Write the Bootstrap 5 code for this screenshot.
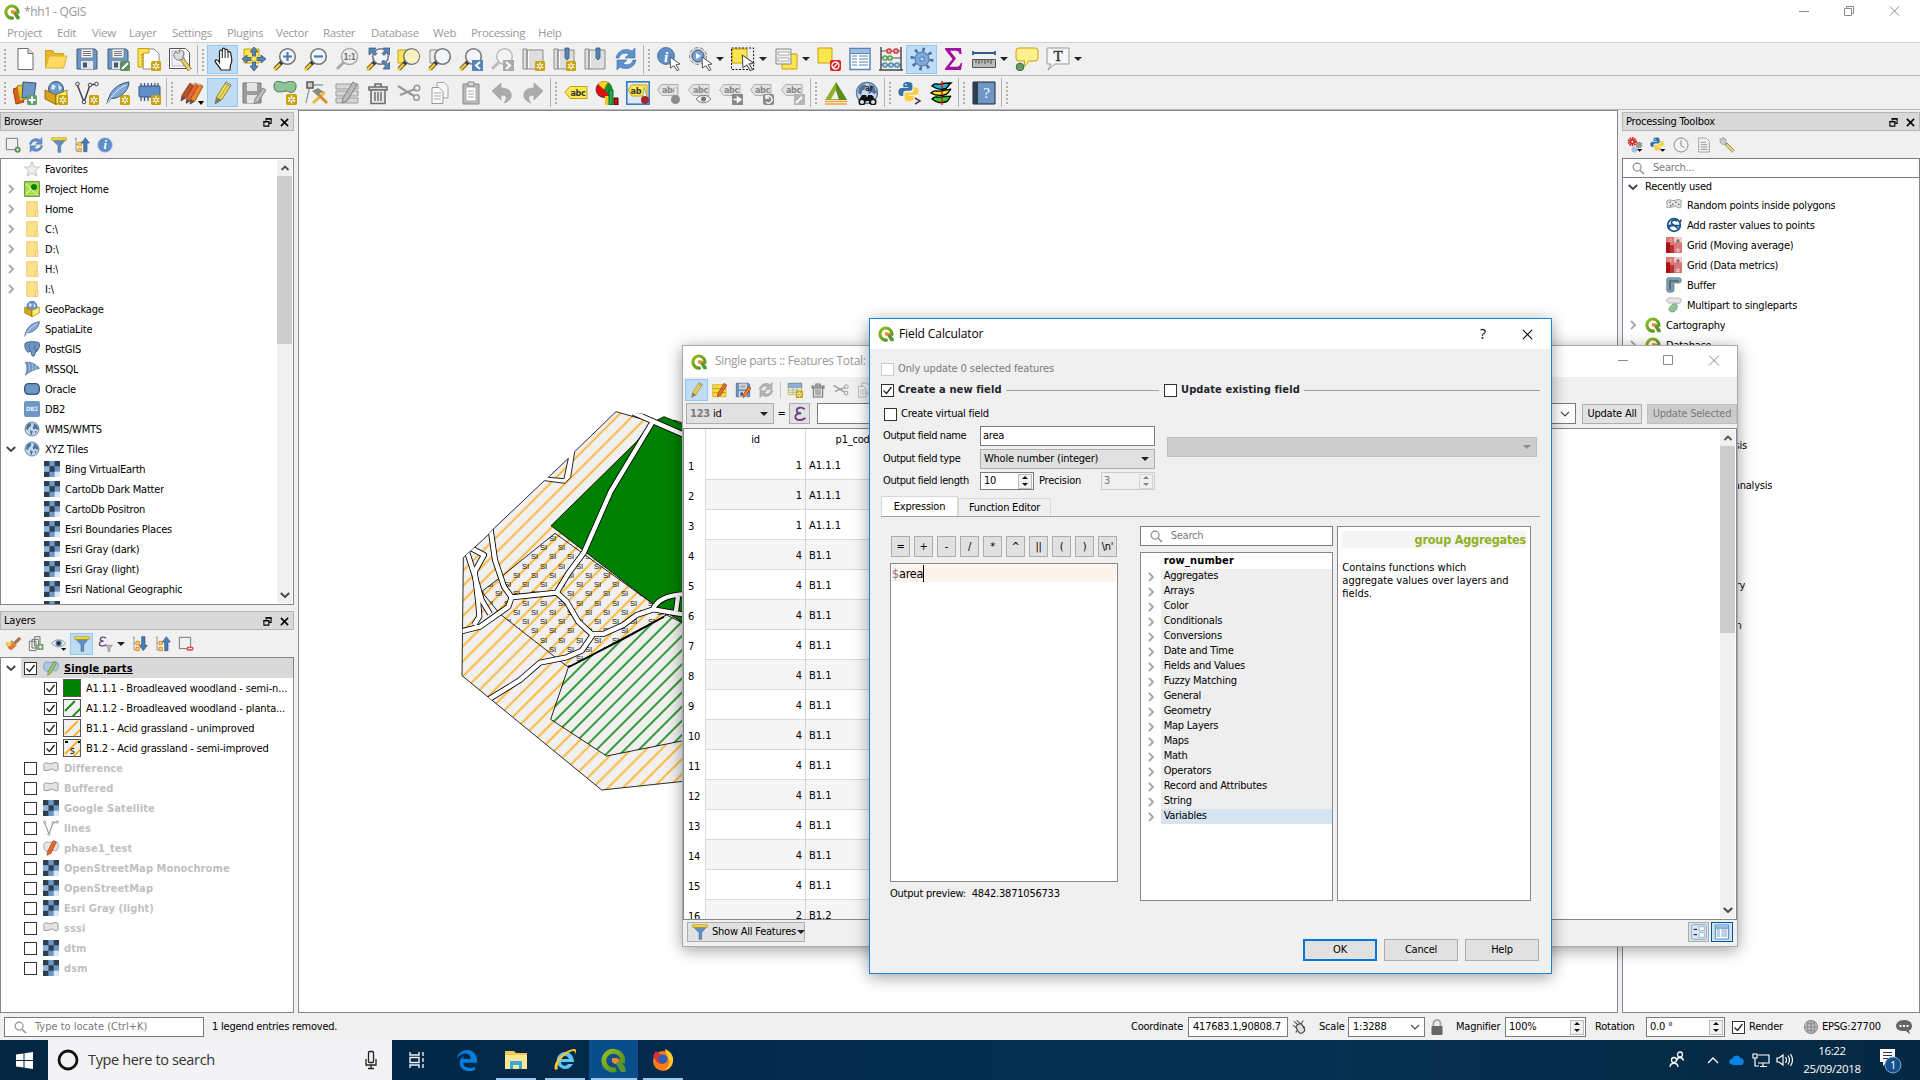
<!DOCTYPE html>
<html lang="en">
<head>
<meta charset="utf-8">
<title>*hh1 - QGIS</title>
<link href="https://cdn.jsdelivr.net/npm/bootstrap@5.3.0/dist/css/bootstrap.min.css" rel="stylesheet">
<style>
:root{--face:#f0f0f0;--edge:#828790;--ui:"DejaVu Sans Condensed","DejaVu Sans","Noto Sans",sans-serif;--seg:"Open Sans","Noto Sans",sans-serif}
body{width:1920px;height:1080px;overflow:hidden;background:var(--face);font:11px/14px var(--ui);font-stretch:condensed;letter-spacing:-.22px;color:#000;white-space:nowrap}
svg{display:block;flex:none}
.seg{font-family:var(--seg);font-stretch:normal}
.i24{width:24px;height:24px}.i20{width:20px;height:20px}.i18{width:18px;height:18px}.i16{width:16px;height:16px}
.titlebar{height:22px;background:#fff;color:#999;font-size:12px;padding-top:1px}
.menus{height:20px;background:#fff;color:#999;font-size:11.5px;letter-spacing:-.35px;display:grid;grid-template-columns:50px 35px 37px 43px 55px 49px 47px 48px 62px 38px 67px 40px;padding:4px 0 0 7px}
.tools{height:34px;border-top:1px solid #d0d0d0;border-bottom:1px solid #b8b8b8}
.grp{padding:0 2px 0 9px;border-right:1px solid #b4b4b4;position:relative}
.grp::before{content:"";position:absolute;left:4px;top:4px;bottom:3px;width:2px;background:repeating-linear-gradient(#b0b0b0 0 2px,transparent 2px 4px)}
.grp.open-end{border:0}
.tb{width:31px;height:29px;display:flex;align-items:center;justify-content:center}
.tb.on,.sb.on{background:#c0dcf3;border:1px solid #90c8f6}
.drop{width:12px}
.drop::after,.dd::after{content:"";display:block;border:4px solid transparent;border-top:4px solid #222;border-bottom:0;margin-left:1px}
.work{height:903px}
.leftdock{width:294px}.rightdock{width:298px;margin-left:4px}
.canvas{width:1320px;height:903px;margin-left:4px;background:#fff;border:1px solid var(--edge);overflow:hidden}
.docktitle{height:19px;margin-top:2px;background:#d9d9d9;border:1px solid #b5b5b5;padding:1px 4px 0 3px}
.docktitle.second{margin-top:6px}
.dockbar{height:27px;padding:1px 0 0 1px}
.sb{width:23px;height:22px;display:flex;align-items:center;justify-content:center}
.sep-v{width:1px;height:16px;background:#c4c4c4;margin:0 2px 0 3px}
.pane{background:#fff;border:1px solid var(--edge);overflow:hidden;position:relative}
.trow{height:20px;display:flex;align-items:center;padding-right:2px}
.chev{width:20px;display:flex;justify-content:center}
.trow .txt{padding-left:5px;overflow:hidden;text-overflow:ellipsis;padding-top:1px}
.cb{width:13px;height:13px;border:1px solid #333;background:#fff;flex:none}
.cb svg{width:11px;height:11px}
.cb.off{border-color:#ccc}
.bld{font-weight:700;letter-spacing:.1px}
.dim{color:#c0c0c0}
.vbar{position:absolute;right:1px;top:1px;bottom:1px;width:15px;background:#f0f0f0;display:flex;flex-direction:column;align-items:center;justify-content:space-between;padding:3px 0}
.vbar i{width:15px;background:#cdcdcd;position:absolute;top:16px}
.field{background:#fff;border:1px solid #7a7a7a;display:flex;align-items:center;padding:0 5px;height:20px}
.combo{background:#e1e1e1;border:1px solid #adadad;display:flex;align-items:center;justify-content:space-between;padding:0 5px 0 3px;height:20px}
.combo.inert{background:#ccc;border-color:#bfbfbf}
.combo.inert::after{border-top-color:#8e8e8e}
.pbtn{background:#e1e1e1;border:1px solid #adadad;display:flex;align-items:center;justify-content:center;height:20px;padding:0;border-radius:0}
.pbtn.h21{height:21px}
.spin{width:14px;height:15px;background:#f0f0f0;border:1px solid #bbb;display:flex;flex-direction:column;justify-content:space-around;align-items:center;flex:none;margin-right:1px}
.spin::before{content:"";border:3px solid transparent;border-bottom-color:#111;border-top:0}
.spin::after{content:"";border:3px solid transparent;border-top-color:#111;border-bottom:0}
.status{height:27px;padding-top:1px}
.gray{color:#7a7a7a}
.win{position:absolute;box-shadow:0 3px 15px rgba(0,0,0,.38)}
.attr{left:682px;top:345px;width:1056px;height:602px;background:var(--face);border:1px solid #aaa}
.wtitle{height:31px;background:#fff;font-size:12px;letter-spacing:-.1px}
.dlg{left:869px;top:318px;width:683px;height:656px;background:var(--face);border:1px solid #1883d7}
.grid-attr{height:492px;display:flex}
.vh{width:22px;border-right:1px solid #dcdcdc;padding-top:21px}
.vh div{height:30px;padding:10px 0 0 4px}
.acol{width:100px;border-right:1px solid #d4d4d4}
.acol .hd{height:21px;text-align:center;padding-top:4px}
.acol .cell{height:30px;border-bottom:1px solid #dadada;padding:9px 3px 0;letter-spacing:0}
.acol .cell:nth-child(odd){background:#f5f5f5}
.num{text-align:right}
.rule{height:1px;background:#a0a0a0;flex:1}
.frow{display:grid;grid-template-columns:97px 175px;align-items:center}
.frow>span{letter-spacing:-.4px}
.ops{gap:4px;margin:10px 0 6px 1px}
.ops .pbtn{width:19px;height:21px}
.tabs{height:20px;border-bottom:1px solid #a0a0a0;display:flex;align-items:flex-end;margin:9px 11px 0}
.tabs div{display:flex;align-items:center;justify-content:center;border:1px solid #d9d9d9;border-bottom:0}
.frw{height:15px;display:flex;align-items:center}
.frw .nm{height:15px;background:#eee;flex:1;padding-left:3px}
.frw .nm.plain{background:#fff;letter-spacing:.15px}.frw .nm.cur{background:#d6e4f0}
.frw .chev{width:20px}
.green-h{background:#f5f5f5;color:#93b023;font-weight:700;font-size:12.5px;height:17px;line-height:18px;text-align:right;letter-spacing:-.2px}
.helptxt{line-height:13px;margin-top:13px;letter-spacing:0;width:176px}
.taskbar{height:40px;background:linear-gradient(90deg,#032440,#042c4f 45%,#06304f 70%,#062842);color:#fff}
.startb{width:48px;height:40px;background:#042640}
.tsearch{width:344px;height:40px;background:#f3f3f5;color:#333;font-size:14.5px;letter-spacing:-.35px}
.tapp{width:49px;height:40px;display:flex;align-items:center;justify-content:center}
.tapp.run{background:linear-gradient(#9cc9ee,#9cc9ee) center bottom/40px 2px no-repeat}
.tapp.act{background:linear-gradient(#9cc9ee,#9cc9ee) center bottom/46px 2px no-repeat,#0a4f8c}
.tray{width:256px}
</style>
<script src="https://cdn.jsdelivr.net/npm/bootstrap@5.3.0/dist/js/bootstrap.bundle.min.js"></script>
</head>
<body class="d-flex flex-column">

<svg width="0" height="0" class="position-absolute">
<defs>
<linearGradient id="qg" x1="0" y1="0" x2="1" y2="1"><stop offset="0" stop-color="#93c01f"/><stop offset="1" stop-color="#4c8a1e"/></linearGradient>
<symbol id="q" viewBox="0 0 24 24"><path d="M20.500 14.500a9 9 0 1 0-6 6.200" fill="none" stroke="url(#qg)" stroke-width="4.600"/><path d="M13 13l4-3 6.500 9v4H19z" fill="#589632"/><path d="M10.500 9.500h5l2.500 2.500-4.500 3.500-3-2z" fill="#f08a2c"/></symbol>
<symbol id="star6" viewBox="0 0 10 10"><rect width="10" height="10" rx="1.500" fill="#c8a20a"/><path d="M5 1.300v7.400M1.800 3.200l6.400 3.600M8.200 3.200L1.800 6.800" stroke="#fff" stroke-width="1.300"/><circle cx="5" cy="5" r="1.100" fill="#c8a20a"/></symbol>
<symbol id="new" viewBox="0 0 24 24"><path d="M5 1.500h10l5 5v16H5z" fill="#fff" stroke="#6d6d6d"/><path d="M15 1.500v5h5" fill="#ddd" stroke="#6d6d6d"/></symbol>
<symbol id="open" viewBox="0 0 24 24"><path d="M1.500 21V3.500h7l2 3h9v3" fill="#e5b92a" stroke="#c99d1d"/><path d="M1.500 21L5 9h18l-3.500 12z" fill="#fddb62" stroke="#dbb236"/></symbol>
<symbol id="save" viewBox="0 0 24 24"><path d="M2 2h18l2 2v18H2z" fill="#6d97c4" stroke="#415a75"/><path d="M6 2h12v9H6z" fill="#f4f4f4" stroke="#7d8a97"/><path d="M8 4.500h8M8 6.500h8M8 8.500h8" stroke="#777"/><path d="M6 14h12v8H6z" fill="#e6e6e6"/><path d="M8 15.500h4v5H8z" fill="#415a75"/></symbol>
<symbol id="saveas" viewBox="0 0 24 24"><use href="#save"/><rect x="14" y="14" width="10" height="10" rx="1.500" fill="#5d8f5f"/><path d="M16 22l6-6" stroke="#fff" stroke-width="2"/></symbol>
<symbol id="layout" viewBox="0 0 24 24"><path d="M6 2h11l5 5v15H6z" fill="#fff" stroke="#888"/><path d="M1 1.500h11v4.500H6v14H1z" fill="#ffe25a" stroke="#c8a20a"/><path d="M4 8h2M4 11h2M4 14h2M4 17h2" stroke="#a88600"/><use href="#star6" x="14" y="14" width="10" height="10"/></symbol>
<symbol id="lmgr" viewBox="0 0 24 24"><path d="M1.500 1.500h16l4 4v16h-20z" fill="#fff" stroke="#555"/><path d="M4 4h12v15H4z" fill="#f0f0fa" stroke="#b9b9d0"/><path d="M14 12l8 11" stroke="#7b6520" stroke-width="4.500"/><path d="M14 12l8 11" stroke="#ecd070" stroke-width="3"/><path d="M8 4c0 2 2 3 3 2s0-3 0-3c4 0 6 3 4 6l0 3-3 1c-3 1-7-2-6-6z" fill="#ddd" stroke="#777"/></symbol>
<symbol id="hand" viewBox="0 0 24 24"><path d="M8 23c-1-3-5-6-6-9 1-2 3-1 4.500 1.500V4.500c0-2 2.500-2 2.800 0V2.500c.2-1.800 2.500-1.800 2.800 0v1c.2-1.600 2.600-1.500 2.800.5v1.500c.5-1.400 2.700-1.200 2.800.6C18.500 11 20 14 17.500 18l-.5 5z" transform="translate(2 0)" fill="#fff" stroke="#222" stroke-width="1.200"/><path d="M11.300 4v7M14.100 3.500V11M17 5v6" stroke="#222"/></symbol>
<symbol id="pansel" viewBox="0 0 24 24"><path d="M2 2h15v14H2z" fill="#fde54f" stroke="#c8a20a"/><path d="M12 0l4 5h-2.500v5.500H19V8l5 4-5 4v-2.500h-5.500V19H16l-4 5-4-5h2.500v-5.500H5V16l-5-4 5-4v2.500h5.500V5H8z" fill="#5684b8" stroke="#35567c" stroke-width=".8"/><path d="M9.500 9.500h5v5h-5z" fill="#fde54f"/></symbol>
<symbol id="mag" viewBox="0 0 24 24"><path d="M2 22l8-8" stroke="#333" stroke-width="4"/><path d="M1 23l6-6" stroke="#f5c62a" stroke-width="2.600"/><circle cx="14.500" cy="9.500" r="7.800" fill="#f1f5f7" stroke="#777" stroke-width="1.600"/></symbol>
<symbol id="zin" viewBox="0 0 24 24"><use href="#mag"/><path d="M14.500 5v9M10 9.500h9" stroke="#4a7cb5" stroke-width="2.200"/></symbol>
<symbol id="zout" viewBox="0 0 24 24"><use href="#mag"/><path d="M10 9.500h9" stroke="#4a7cb5" stroke-width="2.200"/></symbol>
<symbol id="z11" viewBox="0 0 24 24"><path d="M2 22l8-8" stroke="#aaa" stroke-width="3"/><circle cx="14.500" cy="9.500" r="8" fill="#eee" stroke="#aaa" stroke-width="1.500"/><text x="14.500" y="12.500" font-size="8" font-weight="700" text-anchor="middle" fill="#777">1:1</text></symbol>
<symbol id="zfull" viewBox="0 0 24 24"><use href="#mag"/><path d="M3 1h7l-2 2.500 3 3-2 2-3-3L3 8zM24 1h-7l2 2.500-3 3 2 2 3-3 3 2.500zM24 22v-7l-2.500 2-4-4-2 2 4 4-2.500 3z" fill="#5684b8" stroke="#35567c" stroke-width=".7"/></symbol>
<symbol id="zsel" viewBox="0 0 24 24"><path d="M1 3h12v13H1z" fill="#fde54f" stroke="#c8a20a"/><use href="#mag"/><circle cx="15" cy="9.500" r="7" fill="#f7f2c0"/></symbol>
<symbol id="zlay" viewBox="0 0 24 24"><path d="M2 3h12v13H2z" fill="#eee" stroke="#888"/><use href="#mag"/></symbol>
<symbol id="zlast" viewBox="0 0 24 24"><use href="#mag"/><rect x="13" y="13" width="11" height="11" fill="#5684b8"/><path d="M21 15l-4 3.500 4 3.500" fill="none" stroke="#fff" stroke-width="2"/></symbol>
<symbol id="znext" viewBox="0 0 24 24"><path d="M2 22l8-8" stroke="#bbb" stroke-width="3"/><circle cx="14.500" cy="9.500" r="7.800" fill="#f3f3f3" stroke="#bbb" stroke-width="1.500"/><rect x="13" y="13" width="11" height="11" fill="#aaa"/><path d="M16 15l4 3.500-4 3.500" fill="none" stroke="#fff" stroke-width="2"/></symbol>
<symbol id="map" viewBox="0 0 24 24"><path d="M2 2h4v20H2zM6 3h16v19H6z" fill="#dedede" stroke="#8c8c8c"/><path d="M7.500 4v17" stroke="#fff"/></symbol>
<symbol id="mapnew" viewBox="0 0 24 24"><use href="#map"/><use href="#star6" x="14" y="14" width="10" height="10"/></symbol>
<symbol id="bm" viewBox="0 0 24 24"><use href="#map"/><path d="M13 1h4v10l-2 2-2-2z" fill="#5684b8" stroke="#35567c" stroke-width=".8"/></symbol>
<symbol id="bmnew" viewBox="0 0 24 24"><use href="#bm"/><use href="#star6" x="14" y="14" width="10" height="10"/></symbol>
<symbol id="refresh" viewBox="0 0 24 24"><path d="M2 11C3 4 11 0 18 4l3-3v10H11l4-4C10 5 6 7 5 11z" fill="#5f92cc" stroke="#3e6ea6" stroke-width=".6"/><path d="M22 13c-1 7-9 11-16 7l-3 3V13h10l-4 4c5 2 9 0 10-4z" fill="#5f92cc" stroke="#3e6ea6" stroke-width=".6"/></symbol>
<symbol id="refreshg" viewBox="0 0 24 24"><path d="M2 11C3 4 11 0 18 4l3-3v10H11l4-4C10 5 6 7 5 11z" fill="#b5b5b5" stroke="#9a9a9a"/><path d="M22 13c-1 7-9 11-16 7l-3 3V13h10l-4 4c5 2 9 0 10-4z" fill="#b5b5b5" stroke="#9a9a9a"/></symbol>
<symbol id="cursor" viewBox="0 0 12 15"><path d="M1 1l10 7-4 .7 3 5-2 1-3-5L1.500 12z" fill="#fff" stroke="#555"/></symbol>
<symbol id="ident" viewBox="0 0 24 24"><circle cx="9" cy="9" r="8.500" fill="#5f8fc6" stroke="#456d9a" stroke-width=".8"/><text x="9" y="14.500" font-size="15" font-family="Liberation Serif,serif" font-style="italic" font-weight="700" fill="#fff" text-anchor="middle">i</text><use href="#cursor" x="12" y="9" width="12" height="15"/></symbol>
<symbol id="action" viewBox="0 0 24 24"><circle cx="10" cy="9" r="8.500" fill="#ddd" stroke="#888" stroke-dasharray="4 2"/><circle cx="10" cy="9" r="6" fill="#7ba2d2" stroke="#35567c"/><path d="M8 6l5 3-5 3z" fill="#fff"/><use href="#cursor" x="13" y="9" width="12" height="15"/></symbol>
<symbol id="selct" viewBox="0 0 24 24"><path d="M1 2h15v14H1z" fill="#fde54f" stroke="#c8a20a"/><path d="M.6 1h22v21.500H.6z" fill="none" stroke="#111" stroke-dasharray="2 1.500"/><use href="#cursor" x="10" y="7" width="14" height="17"/></symbol>
<symbol id="formsel" viewBox="0 0 24 24"><path d="M8 7h15v15H8z" fill="#fde54f" stroke="#c8a20a"/><path d="M2 2h15v15H2z" fill="#eee" stroke="#888"/><path d="M4 5h11v3H4zM4 11h11v3H4z" fill="#fff" stroke="#999" stroke-width=".8"/></symbol>
<symbol id="desel" viewBox="0 0 24 24"><path d="M1 1h14v15H1z" fill="#fde54f" stroke="#c8a20a"/><rect x="13" y="13" width="11" height="11" rx="2" fill="#d22"/><circle cx="18.500" cy="18.500" r="3.500" fill="none" stroke="#fff" stroke-width="1.300"/><path d="M16 21l5-5" stroke="#fff" stroke-width="1.300"/></symbol>
<symbol id="table" viewBox="0 0 24 24"><path d="M2 1.500h20v21H2z" fill="#fff" stroke="#5684b8" stroke-width="1.500"/><path d="M3 2h18v4H3z" fill="#9cbde0"/><path d="M4 9h5M11 9h9M4 12h5M11 12h9M4 15h5M11 15h9M4 18h5M11 18h9M3 6.500h18" stroke="#5684b8" stroke-width="1.200"/></symbol>
<symbol id="abac" viewBox="0 0 24 24"><path d="M2 0v23M22 0v23M0 23h24" stroke="#444" stroke-width="1.400"/><path d="M2 4h20M2 11h20M2 18h20" stroke="#555"/><g stroke-width="1.300"><g fill="#f6b0b0" stroke="#c33"><circle cx="10" cy="4" r="2.200"/><circle cx="17" cy="4" r="2.200"/></g><g fill="#bfe6bf" stroke="#4b9a4b"><circle cx="6" cy="11" r="2.200"/><circle cx="11" cy="11" r="2.200"/></g><g fill="#bcd8ee" stroke="#4a83ad"><circle cx="6" cy="18" r="2.200"/><circle cx="12" cy="18" r="2.200"/><circle cx="18" cy="18" r="2.200"/></g></g></symbol>
<symbol id="gear" viewBox="0 0 24 24"><circle cx="12" cy="12" r="9.500" fill="none" stroke="#4472a8" stroke-width="4" stroke-dasharray="2.600 4.860"/><circle cx="12" cy="12" r="7" fill="#7fa8db" stroke="#4472a8"/><circle cx="12" cy="12" r="2.200" fill="#c0dcf3" stroke="#4472a8"/></symbol>
<symbol id="sigma" viewBox="0 0 24 24"><path d="M4 1h16l.5 6h-2c-.5-2.500-1.500-3.200-4-3.200H9l6 7.700-6.500 8.200h7c2.500 0 3.500-1 4.200-3.700h1.500L20 23H4v-1.500l7.500-9.500L4 2.500z" fill="#a50fa0"/></symbol>
<symbol id="ruler" viewBox="0 0 24 24"><path d="M1 6h22M1 4v4M23 4v4" stroke="#2f5a8c" stroke-width="1.800"/><path d="M.5 12.500h23v8H.5z" fill="#bbb" stroke="#555"/><path d="M4 13v3M7 13v4M10 13v3M13 13v4M16 13v3M19 13v4" stroke="#444"/></symbol>
<symbol id="tip" viewBox="0 0 24 24"><path d="M4 1h16q3 0 3 3v7q0 3-3 3h-6l-5 6 .5-6H4q-3 0-3-3V4q0-3 3-3z" fill="#fdf08a" stroke="#c8a20a"/><circle cx="5" cy="20" r="3.800" fill="#6a9a6c" stroke="#3c6e3e"/></symbol>
<symbol id="textann" viewBox="0 0 24 24"><path d="M1 1h22v16H9l-7 6 3-6H1z" fill="#f4f6f8" stroke="#999"/><text x="12" y="14" font-size="15" font-family="Liberation Serif,serif" text-anchor="middle" fill="#333" stroke="#333" stroke-width=".4">T</text></symbol>
<symbol id="dsrc" viewBox="0 0 24 24"><path d="M0 8l6-2 5 15-8 2z" fill="#d9611c" stroke="#9a3f0d"/><path d="M4 5l11-2 1 14-9 3z" fill="#f0c22c" stroke="#a88600"/><path d="M10 1l13 1-2 14-12 1z" fill="#6d97c4" stroke="#35567c"/><rect x="14" y="14" width="10" height="10" rx="1.500" fill="#5d9f6f"/><path d="M19 15.500v7M15.500 19h7" stroke="#fff" stroke-width="2"/></symbol>
<symbol id="globe" viewBox="0 0 24 24"><circle cx="12" cy="12" r="10.500" fill="#c3d7ec" stroke="#56799f" stroke-width="1.300"/><path d="M4 7c3-4 5-4 7-3l-1 4-3 2-1 4-3-2zM14 3l5 3 3 6-3 1-2-2-3 2-1-4 2-2zM9 14l4 1-1 5-2 1zM16 15l3 0-2 4z" fill="#4f7096"/></symbol>
<symbol id="gpkg" viewBox="0 0 24 24"><circle cx="12" cy="8" r="7.500" fill="#6d97c4" stroke="#35567c"/><path d="M8 3l4 2-2 4-3-1zM14 3l4 4-3 3z" fill="#d6e3f0"/><path d="M1 9l11 5v9.500L1 18z" fill="#d9a514" stroke="#7c5e08" stroke-width=".8"/><path d="M23 9l-11 5v9.500L23 18z" fill="#ffef69" stroke="#7c5e08" stroke-width=".8"/></symbol>
<symbol id="gpkgn" viewBox="0 0 24 24"><use href="#gpkg"/><use href="#star6" x="14" y="14" width="10" height="10"/></symbol>
<symbol id="vline" viewBox="0 0 24 24"><path d="M2 3l7 18L15 4l7-1" fill="none" stroke="currentColor" stroke-width="1.500"/><g fill="#eee" stroke="currentColor"><circle cx="2.500" cy="3" r="1.800"/><circle cx="9" cy="21" r="1.800"/><circle cx="15" cy="4" r="1.800"/><circle cx="21.500" cy="3" r="1.800"/></g></symbol>
<symbol id="vlinen" viewBox="0 0 24 24"><use href="#vline" color="#445"/><use href="#star6" x="14" y="14" width="10" height="10"/></symbol>
<symbol id="feather" viewBox="0 0 24 24"><path d="M1 23C3 12 9 3 23 1c0 5-3 12-13 16l-5 .5z" fill="#7fa8d4" stroke="#35567c"/><path d="M1 23C6 14 12 8 20 4" fill="none" stroke="#e9f0f8"/></symbol>
<symbol id="feathern" viewBox="0 0 24 24"><use href="#feather"/><use href="#star6" x="14" y="14" width="10" height="10"/></symbol>
<symbol id="chip" viewBox="0 0 24 24"><path d="M4 2v18M7.500 2v18M11 2v18M14.500 2v18M18 2v18M21 2v18" stroke="#35567c" stroke-width="1.200"/><rect x="2" y="5" width="21" height="11" rx="1" fill="#5f8fc6" stroke="#35567c"/><use href="#star6" x="14" y="14" width="10" height="10"/></symbol>
<symbol id="pencil" viewBox="0 0 24 24"><path d="M4 23l1.500-7L15 1l5 3-9.500 15z" fill="#f2dd5b" stroke="#8f7f2c"/><path d="M14 2.500l1-1.500 5 3-1 1.600z" fill="#ddd" stroke="#888"/><path d="M4 23l1.500-7 5 3z" fill="#7a7a7a"/><path d="M8 17.500l9-14" stroke="#b3a136"/></symbol>
<symbol id="pencils" viewBox="0 0 24 24"><g stroke="#8e3414" stroke-width=".7"><path d="M1 20l1-6L10 2l4 2.500L6 17z" fill="#b5502c"/><path d="M6 22l1-6L15 2l4 2.500L11 19z" fill="#e8662a"/><path d="M10 23l1-6L19 3l4 2.500L15 20z" fill="#e8862a"/></g><path d="M1 20l1-5 3.500 2zM6 23l1-5 3.500 2zM10 23.500l1-5 3.500 2z" fill="#555"/><path d="M10 2l1-1 4 2-1 1.500zM15 2l1-1 4 2-1 1.500z" fill="#ccc"/><path d="M18 20h6l-3 4z"/></symbol>
<symbol id="saveg" viewBox="0 0 24 24"><path d="M1 2h18v20H1z" fill="#9c9c9c" stroke="#777"/><path d="M5 2h10v8H5zM5 14h10v8H5z" fill="#e4e4e4"/><path d="M12 23l1-5 8-11 3 2-8 12z" fill="#b9b9b9" stroke="#888"/></symbol>
<symbol id="poly" viewBox="0 0 24 24"><path d="M1 6c0-6 5-5 11-3 6-3 12-2 11 4-1 7-5 6-9 4-4 0-13 4-13-5z" fill="#8fc496" stroke="#4d7d55"/></symbol>
<symbol id="polyn" viewBox="0 0 24 24"><use href="#poly" y="-1"/><use href="#star6" x="13" y="13" width="11" height="11"/></symbol>
<symbol id="node" viewBox="0 0 24 24"><path d="M2 22L6 4h13" fill="none" stroke="#999" stroke-width="1.300"/><path d="M3 1h6v6H3z" fill="#ccc" stroke="#555" stroke-width="1.500"/><path d="M9 22l12-11" stroke="#e8b83a" stroke-width="3"/><path d="M12 11l11 11" stroke="#df8a28" stroke-width="3"/><path d="M8 10l6-3 6 4-4 1-2 3z" fill="#888"/></symbol>
<symbol id="attrs" viewBox="0 0 24 24"><path d="M1 3h22v5H1zM1 10h22v5H1zM1 17h22v5H1z" fill="#d6d6d6" stroke="#999"/><path d="M7 22l1-5L18 1l4 2.500L12 20z" fill="#bbb" stroke="#808080"/></symbol>
<symbol id="trash" viewBox="0 0 24 24"><path d="M3 6h18v3H3zM9 3h6v3H9z" fill="#ddd" stroke="#707070" stroke-width="1.600"/><path d="M5 9h14v13.500H5z" fill="#e8e8e8" stroke="#707070" stroke-width="1.600"/><path d="M9 11v9M12 11v9M15 11v9" stroke="#707070" stroke-width="1.500"/></symbol>
<symbol id="cut" viewBox="0 0 24 24"><path d="M1 5l16 10M3 14L18 8" stroke="#9a9a9a" stroke-width="2.200"/><circle cx="20" cy="7" r="2.800" fill="none" stroke="#999" stroke-width="1.500"/><circle cx="19.500" cy="16.500" r="2.800" fill="none" stroke="#999" stroke-width="1.500"/></symbol>
<symbol id="copy" viewBox="0 0 24 24"><path d="M9 1.500h7l4 4V17H9z" fill="#f6f6f6" stroke="#a4a4a4"/><path d="M4 6.500h7l4 4v12H4z" fill="#fafafa" stroke="#999"/><path d="M6 12h7M6 15h7M6 18h7" stroke="#aaa"/></symbol>
<symbol id="paste" viewBox="0 0 24 24"><path d="M4 3h16v20H4z" fill="#bbb" stroke="#888"/><path d="M7 6h10v14H7z" fill="#fff" stroke="#aaa"/><path d="M9 1h6v4H9z" fill="#ddd" stroke="#888"/><path d="M9 10h6M9 13h6M9 16h6" stroke="#aaa"/></symbol>
<symbol id="undo" viewBox="0 0 24 24"><path d="M2 10l9-8v5c8 0 11 4 10 9-1 3-4 5-7 6 4-5 3-8-3-8v5z" fill="#ababab" stroke="#979797" stroke-width=".6"/></symbol>
<symbol id="label" viewBox="0 0 24 24"><path d="M1 11l5-5.500h17v12H6z" fill="#fce94f" stroke="#c8a20a"/><text x="14" y="14.500" font-size="9" font-weight="700" text-anchor="middle" fill="#333" letter-spacing="-.3">abc</text></symbol>
<symbol id="labelg" viewBox="0 0 24 24"><path d="M.5 9l4-5.500H21v11H5z" fill="#e2e2e2" stroke="#b0b0b0"/><text x="12.500" y="12" font-size="9" font-weight="700" text-anchor="middle" fill="#888" letter-spacing="-.3">abc</text></symbol>
<symbol id="diag" viewBox="0 0 24 24"><circle cx="9" cy="8.500" r="8" fill="#d11" stroke="#400" stroke-width=".6"/><path d="M9 8.500L3 3a8 8 0 0 1 10-1.500z" fill="#f4d61c"/><path d="M9 8.500l4-7a8 8 0 0 1 2 13z" fill="#1a8f2c"/><path d="M10 15h4v9h-4z" fill="#f6c81c"/><path d="M14 9h4v15h-4z" fill="#1fae3a" stroke="#064"/><path d="M19 17h4v7h-4z" fill="#c11" stroke="#400"/></symbol>
<symbol id="labpin" viewBox="0 0 24 24"><rect x=".8" y=".8" width="22.400" height="22.400" fill="#dfeaf5" stroke="#2a72c8" stroke-width="1.500"/><path d="M2 9l4-5h15v11H6z" fill="#fce94f" stroke="#c8a20a"/><text x="10" y="12.500" font-size="9" font-weight="700" text-anchor="middle" fill="#333">ab</text><path d="M18 6l3 10-4 1z" fill="#f3f3f3" stroke="#888" stroke-width=".6"/><circle cx="19" cy="19" r="4" fill="#a52323"/></symbol>
<symbol id="labpg" viewBox="0 0 24 24"><use href="#labelg"/><path d="M17 7h3v9h-3z" fill="#eee" stroke="#aaa" stroke-width=".6"/><circle cx="18.500" cy="18.500" r="4.500" fill="#8c8c8c"/></symbol>
<symbol id="labeye" viewBox="0 0 24 24"><use href="#labelg"/><path d="M8 18c4-5 11-5 15 0-4 5-11 5-15 0z" fill="#eee" stroke="#777"/><circle cx="15.500" cy="18" r="2.500" fill="#777"/></symbol>
<symbol id="labmv" viewBox="0 0 24 24"><use href="#labelg"/><rect x="13" y="13" width="11" height="11" fill="#8a8a8a"/><path d="M14.500 18.500h5M18.500 16l3.500 2.500-3.500 2.500z" fill="#fff" stroke="#fff" stroke-width="1.500"/></symbol>
<symbol id="labrot" viewBox="0 0 24 24"><use href="#labelg"/><rect x="13" y="13" width="11" height="11" rx="2" fill="#8a8a8a"/><path d="M16 16a3.500 3.500 0 1 1 0 5M16 14v3h3" fill="none" stroke="#fff" stroke-width="1.300"/></symbol>
<symbol id="labed" viewBox="0 0 24 24"><use href="#labelg"/><rect x="13" y="13" width="11" height="11" fill="#b5b5b5"/><path d="M15 22l6-6" stroke="#fff" stroke-width="2"/></symbol>
<symbol id="tri" viewBox="0 0 24 24"><path d="M12 1l11 18H1zM12 9l-5 9h8z" fill="#8db02e" fill-rule="evenodd"/><path d="M12 1l11 18h-8l-3-10z" fill="#5e8a1e"/><path d="M1 20.500h22M1 23h22" stroke="#f2a23c" stroke-width="1.400"/></symbol>
<symbol id="osm" viewBox="0 0 24 24"><use href="#globe"/><text x="14" y="10" font-size="8" font-weight="700" text-anchor="middle" fill="#223">ar</text><path d="M7 14h4v2h2v-2h4l3 5v4h-6v-3h-4v3H4v-4z" fill="#111"/><circle cx="7" cy="21" r="2.800" fill="#ddd" stroke="#111" stroke-width="1.500"/><circle cx="18" cy="21" r="2.800" fill="#ddd" stroke="#111" stroke-width="1.500"/></symbol>
<symbol id="py" viewBox="0 0 24 24"><path d="M11 1c-4 0-5 1.500-5 3.500V7h6v1H4c-2.500 0-3.500 2-3.500 4.500S1.500 17 4 17h2v-3c0-2 1.500-3 3-3h5c1.500 0 2.500-1 2.500-2.500v-4C16.500 2 15 1 11 1z" fill="#3572a5"/><path d="M13 23c4 0 5-1.500 5-3.500V17h-6v-1h8c2.500 0 3.500-2 3.500-4.500S22.500 7 20 7h-2v3c0 2-1.500 3-3 3h-5c-1.500 0-2.500 1-2.500 2.500v4C7.500 22 9 23 13 23z" fill="#fdcf3d"/><circle cx="9" cy="4" r="1" fill="#fff"/></symbol>
<symbol id="pyc" viewBox="0 0 24 24"><use href="#py" width="21" height="21"/><path d="M17 17l5 3-5 3" fill="none" stroke="#444" stroke-width="1.500"/></symbol>
<symbol id="stack" viewBox="0 0 24 24"><g stroke="#000" stroke-width="1.300"><path d="M3 18c4-4 4-1 9-2 3-1 7 0 10-1-3 3-2 6-6 6-5 1-8 1-13-3z" fill="#2bd02b"/><path d="M2 12c4-4 5-1 10-2 3-1 7-1 10-2-4 4-3 6-7 6-5 1-8 1-13-2z" fill="#f7e51d"/><path d="M3 5c3-4 5-1 9-2 3-1 7-1 10-1-4 3-3 6-7 6-5 1-8 0-12-3z" fill="#19b5cf"/></g><path d="M13 0v7M13 10v3M13 17v7" stroke="#e11" stroke-width="1.500"/></symbol>
<symbol id="book" viewBox="0 0 24 24"><path d="M1 1h22v22H1z" fill="#6d97c4" stroke="#223"/><path d="M1 1h5v22H1z" fill="#2c3e50"/><text x="14.500" y="17" font-size="15" font-family="Liberation Serif,serif" text-anchor="middle" fill="#fff">?</text></symbol>
<symbol id="plusbox" viewBox="0 0 24 24"><path d="M2 2h17v17H2z" fill="none" stroke="#777" stroke-width="1.500"/><circle cx="19" cy="19" r="4" fill="#6aa56c" stroke="#3c6e3e"/><path d="M19 17v4M17 19h4" stroke="#fff"/></symbol>
<symbol id="minusbox" viewBox="0 0 24 24"><path d="M2 2h17v17H2z" fill="none" stroke="#777" stroke-width="1.500"/><rect x="13" y="16" width="10" height="6" rx="2" fill="#e04a4a"/><path d="M15 19h6" stroke="#fff" stroke-width="1.500"/></symbol>
<symbol id="funnel" viewBox="0 0 24 24"><path d="M2 4h20l-7.500 9v10h-4V13z" fill="#5f8fc6" stroke="#3e5f86" stroke-width=".8"/><path d="M1 1h22v4H1z" fill="#f4dc3e" stroke="#a88600" stroke-width=".8"/></symbol>
<symbol id="treeup" viewBox="0 0 24 24"><path d="M1 2h3M3 2v19h3M3 11h3" fill="none" stroke="#999" stroke-width="1.500"/><path d="M6 8h5v5H6zM6 17h5v5H6z" fill="#ffd27a" stroke="#e69017" stroke-width="1.500"/><path d="M17 1l6 8h-3.500v13h-5V9H11z" fill="#4a7cb5" stroke="#2f5582"/></symbol>
<symbol id="treedn" viewBox="0 0 24 24"><path d="M1 2h3M3 2v19h3M3 11h3" fill="none" stroke="#999" stroke-width="1.500"/><path d="M6 8h5v5H6zM6 17h5v5H6z" fill="#ffd27a" stroke="#e69017" stroke-width="1.500"/><path d="M17 22l6-8h-3.500V1h-5v13H11z" fill="#4a7cb5" stroke="#2f5582"/></symbol>
<symbol id="info" viewBox="0 0 24 24"><circle cx="12" cy="12" r="11" fill="#5f8fc6" stroke="#a9c3e2"/><text x="12" y="18.500" font-size="18" font-family="Liberation Serif,serif" font-style="italic" font-weight="700" fill="#fff" text-anchor="middle">i</text></symbol>
<symbol id="fav" viewBox="0 0 24 24"><path d="M12 1l3.300 7.500 8 .8-6 5.400 1.800 8L12 18.500 4.900 22.700l1.800-8-6-5.400 8-.8z" fill="#eceee8" stroke="#a9aba4"/></symbol>
<symbol id="phome" viewBox="0 0 24 24"><path d="M1 1h22v22H1z" fill="#a9e04f" stroke="#5d8a1c" stroke-width="1.500"/><path d="M2 4l19 18M2 20l9-8" stroke="#e7f7c8" stroke-width="1.500"/><circle cx="15" cy="9" r="4.500" fill="#117a11"/></symbol>
<symbol id="folder" viewBox="0 0 24 24"><path d="M4 1h16v22H4z" fill="#ffe08a" stroke="#e6bd4e"/><path d="M17 15h4v8h-4z" fill="#ffe9a8" stroke="#e6bd4e"/></symbol>
<symbol id="pg" viewBox="0 0 24 24"><path d="M2 3c5-3 15-2 20-1 3 5 0 11-3 14l-1-4c-1 5-1 10-4 11-3 0-3-5-4-8l-4 2C2 14 0 7 2 3z" fill="#6d97c4" stroke="#35567c" stroke-width="1.300"/><path d="M8 4c-1 4 0 8 2 10M16 4c1 3 0 6-2 8" fill="none" stroke="#35567c"/></symbol>
<symbol id="ms" viewBox="0 0 24 24"><path d="M2 2c9-1 17 3 21 9C17 13 9 15 2 21c3-6 3-13 0-19z" fill="#6d97c4" stroke="#456d9a"/><path d="M7 3q3 8 0 13M12 4q3 6 0 10M17 6q2 4 0 7" fill="none" stroke="#cfe0f0"/></symbol>
<symbol id="ora" viewBox="0 0 24 24"><rect x="1" y="4" width="22" height="16" rx="6" fill="#6d97c4" stroke="#35567c" stroke-width="2"/></symbol>
<symbol id="db2" viewBox="0 0 24 24"><rect width="24" height="24" rx="3" fill="#6d97c4"/><text x="12" y="15" font-size="9" font-weight="700" fill="#e8eff7" text-anchor="middle">DB2</text></symbol>
<symbol id="xyz" viewBox="0 0 24 24"><path d="M0 0h24v24H0z" fill="#6d97c4"/><path d="M0 0h8v8H0zM16 0h8v8h-8zM8 8h8v8H8zM0 16h8v8H0z" fill="#2c3e50"/><path d="M16 16h8v8h-8z" fill="#dbe6f2"/><path d="M0 8h8v8H0z" fill="#8fb3da"/></symbol>
<symbol id="polyg" viewBox="0 0 24 24"><path d="M1 8c0-6 5-5 11-3 5-3 11-3 11 1-1 3-1 8 0 9-1 4-6 2-9-1-4 2-13 5-13 1 1-2 1-4 0-7z" transform="translate(0 1.500) scale(1 .85)" fill="#e4e4e4" stroke="#8a8a8a" stroke-width="1.400"/></symbol>
<symbol id="randp" viewBox="0 0 24 24"><use href="#polyg"/><path d="M5 8h2M9 11h2M14 8h2M18 11h2M6 13h2" stroke="#555" stroke-width="2"/></symbol>
<symbol id="polyed" viewBox="0 0 24 24"><path d="M1 9c0-7 5-7 11-5 6-3 12-2 11 5-1 9-5 8-9 6-4 2-13 5-13-6z" fill="#a9c6e3" stroke="#6a8cae"/><path d="M7 23l1-6 8-14 4 2-8 15z" fill="#9fc46a" stroke="#678a34"/></symbol>
<symbol id="polyr" viewBox="0 0 24 24"><path d="M1 9c0-7 5-7 11-5 6-3 12-2 11 5-1 9-5 8-9 6-4 2-13 5-13-6z" fill="#e4e4e4" stroke="#8a8a8a"/><path d="M6 23l1-6 8-16 5 2-8 17z" fill="#e8662a" stroke="#a03c10"/></symbol>
<symbol id="brush" viewBox="0 0 24 24"><path d="M13 10l8-8 2.500 2.500-8 8z" fill="#b07a44" stroke="#704820"/><path d="M10 7l7 7-3 3-7-7z" fill="#e9a066" stroke="#a0602c"/><path d="M1 9l8 0 6 6-4 6-5-1z" fill="#e36e3a"/><path d="M1 9l8 0 1 5-6 2z" fill="#f2d34b"/><path d="M1 9l3 7-1-1z" fill="#d22"/></symbol>
<symbol id="addgrp" viewBox="0 0 24 24"><path d="M2 8h10v14H2zM6 5h10v13H6zM10 1h8v14h-8z" fill="none" stroke="#6f7a6f" stroke-width="1.500"/><path d="M14 12h9v9h-9z" fill="#6aa56c"/><path d="M18.500 14v5M16 16.500h5" stroke="#fff" stroke-width="1.500"/></symbol>
<symbol id="eye" viewBox="0 0 24 24"><path d="M1 11C6 4 17 4 22 11 17 18 6 18 1 11z" fill="#e9eef3" stroke="#8b98a5" stroke-width="1.500"/><circle cx="11.500" cy="11" r="4.500" fill="#4f7096"/><circle cx="11.500" cy="11" r="2" fill="#111"/><path d="M15 18h8l-4 4z"/></symbol>
<symbol id="eps" viewBox="0 0 24 24"><path d="M19 5C15 1 7 2 7 6.500c0 3 3 4.500 7 4.500-5 0-9 1.500-9 5.500 0 5.500 10 6 15 1.500" fill="none" stroke="#6b3f7d" stroke-width="2.800"/></symbol>
<symbol id="epsf" viewBox="0 0 24 24"><use href="#eps" width="17" height="17"/><path d="M13 14h10l-3.500 4v5h-3v-5z" fill="#bbb" stroke="#888"/></symbol>
<symbol id="gears" viewBox="0 0 24 24"><circle cx="8" cy="7" r="5" fill="none" stroke="#d02a2a" stroke-width="4" stroke-dasharray="2.200 1"/><circle cx="8" cy="7" r="4" fill="#d02a2a"/><circle cx="8" cy="7" r="1.500" fill="#fff"/><circle cx="18" cy="12" r="4" fill="#999" stroke="#888" stroke-width="2" stroke-dasharray="2 1"/><circle cx="11" cy="19" r="3.500" fill="#a9c3e8" stroke="#9ab6de" stroke-width="2" stroke-dasharray="2 1"/><path d="M15 18h8l-4 4z"/></symbol>
<symbol id="pyd" viewBox="0 0 24 24"><use href="#py" width="21" height="21"/><path d="M15 18h8l-4 4z"/></symbol>
<symbol id="clock" viewBox="0 0 24 24"><circle cx="12" cy="12" r="10.500" fill="#f3f3f3" stroke="#8b8b8b" stroke-width="1.500"/><path d="M12 5v8l5 3" fill="none" stroke="#888" stroke-width="1.500"/></symbol>
<symbol id="doc" viewBox="0 0 24 24"><path d="M4 1.500h11l5 5v16H4z" fill="#f3f3f3" stroke="#999" stroke-width="1.300"/><path d="M7 8h8M7 11.500h10M7 15h10M7 18.500h10" stroke="#999" stroke-width="1.500"/></symbol>
<symbol id="wrench" viewBox="0 0 24 24"><path d="M10 10l12 12" stroke="#8f7f3c" stroke-width="5"/><path d="M11 11l11 11" stroke="#ecd98a" stroke-width="3"/><path d="M2 2c1 1 3 3 4 2s-1-3-1-3c5 0 7 4 5 8L8 11C4 12 0 8 2 2z" fill="#ccc" stroke="#888"/></symbol>
<symbol id="saga" viewBox="0 0 24 24"><circle cx="12" cy="12" r="9.500" fill="#fff" stroke="#17518c" stroke-width="2.600"/><path d="M21 8l2-4M17 6c-6-3-11 1-8 4l9 7M3 13h18M8 11l-3 5" fill="none" stroke="#17518c" stroke-width="2.400"/></symbol>
<symbol id="gridr" viewBox="0 0 24 24"><path d="M0 0h24v24H0z" fill="#d77"/><path d="M0 8h6v16H0z" fill="#a11"/><path d="M6 12h6v12H6z" fill="#b33"/><path d="M12 0h12v8H12z" fill="#efc9c9"/><path d="M12 14h6v10h-6z" fill="#cf8080"/><circle cx="18" cy="6" r="2.500" fill="#777"/><circle cx="7" cy="5" r="2" fill="none" stroke="#fbb"/><circle cx="18" cy="20" r="2" fill="none" stroke="#fff"/></symbol>
<symbol id="buf" viewBox="0 0 24 24"><path d="M5 23q-4 0-4-4V4q0-3 3-3h16q3 0 3 4t-3 4h-8v10q0 4-4 4z" fill="#7f9ab3" stroke="#5d7a94"/><path d="M6 19V6h13" fill="none" stroke="#55695a" stroke-width="2.500"/></symbol>
<symbol id="multi" viewBox="0 0 24 24"><path d="M1 5c1-5 7-4 12-3 5-1 10-1 10 3s-4 6-8 4C10 8 2 12 1 5z" fill="#e4e4e4" stroke="#999"/><path d="M14 10c5 1 3 10-2 12-6 2-9-2-7-6 2-3 4-6 9-6z" fill="#8fc496" stroke="#6a8f6e"/></symbol>
<symbol id="cR" viewBox="0 0 10 10"><path d="M3 .8L7 5 3 9.200" fill="none" stroke="#a6a6a6" stroke-width="1.900"/></symbol>
<symbol id="cD" viewBox="0 0 10 10"><path d="M.8 3L5 7l4.200-4" fill="none" stroke="#444" stroke-width="1.900"/></symbol>
<symbol id="cDt" viewBox="0 0 10 10"><path d="M1 3l4 4 4-4" fill="none" stroke="#444" stroke-width="1.100"/></symbol>
<symbol id="cU" viewBox="0 0 10 10"><path d="M1.500 7L5 3.500 8.500 7" fill="none" stroke="#505050" stroke-width="1.800"/></symbol>
<symbol id="tick" viewBox="0 0 11 11"><path d="M1.500 5.500l3 3 5-6.500" fill="none" stroke="#222" stroke-width="1.300"/></symbol>
<symbol id="float" viewBox="0 0 10 10"><path d="M3.500 3V1h5.500v5H7M1 4h5.500v5H1z" fill="none" stroke="#000" stroke-width="1.200"/><path d="M3 1h6.500M.5 4h6.500" stroke="#000" stroke-width="1.600"/></symbol>
<symbol id="x" viewBox="0 0 10 10"><path d="M1 1l8 8M9 1L1 9" stroke="currentColor" stroke-width="1.700"/></symbol>
<symbol id="xt" viewBox="0 0 12 12"><path d="M1 1l10 10M11 1L1 11" stroke="currentColor" stroke-width="1.100"/></symbol>
<symbol id="lens" viewBox="0 0 14 14"><circle cx="5.500" cy="5.500" r="4.300" fill="none" stroke="#8a8a8a" stroke-width="1.200"/><path d="M8.800 8.800l4 4" stroke="#8a8a8a" stroke-width="1.500"/></symbol>
<symbol id="tblnew" viewBox="0 0 24 24"><path d="M2 2h20v17H2z" fill="#f8efb0" stroke="#c8a20a"/><path d="M2 2h20v6H2z" fill="#8db3dd" stroke="#5684b8"/><path d="M2 12h20M2 15.500h20M9 8v11M15 8v11" stroke="#7ea4cf"/><use href="#star6" x="13" y="13" width="11" height="11"/></symbol>
<symbol id="multied" viewBox="0 0 24 24"><path d="M1 4h20v18H1z" fill="#f4dc3e" stroke="#c8a20a"/><path d="M1 10h20M1 16h20" stroke="#c8a20a" stroke-width="1.500"/><path d="M8 22l1-5L18 2l4 2.500L13 20z" fill="#e0703a" stroke="#8e3414"/></symbol>
<symbol id="saveed" viewBox="0 0 24 24"><use href="#save"/><path d="M12 23l1-5 7-11 4 2-8 12z" fill="#e8862a" stroke="#8e3414"/></symbol>
<symbol id="formv" viewBox="0 0 24 24"><rect x="1" y="1" width="22" height="22" rx="2" fill="#dbe7f5" stroke="#8fadd0" stroke-width="1.500"/><path d="M4 8h5M4 16h5" stroke="#333" stroke-width="1.800"/><path d="M12 4h8v6h-8zM12 13h8v7h-8z" fill="#fff" stroke="#8fadd0" stroke-width="1.300"/></symbol>
</defs>
</svg>

<!-- Main window -->
<div class="titlebar seg d-flex align-items-center">
  <svg class="i16 ms-1"><use href="#q"/></svg><span class="ps-1 flex-grow-1" style="letter-spacing:-.4px">*hh1 - QGIS</span>
  <svg width="140" height="20" viewBox="0 0 140 20" fill="none" stroke="#8a8a8a" style="margin-right:6px"><path d="M25 9.500h10M70.500 6.500h7v7h-7zM72.500 6V4.500h7v7H78M116 4.500l9 9M125 4.500l-9 9"/></svg>
</div>
<nav class="menus seg"><span>Project</span><span>Edit</span><span>View</span><span>Layer</span><span>Settings</span><span>Plugins</span><span>Vector</span><span>Raster</span><span>Database</span><span>Web</span><span>Processing</span><span>Help</span></nav>
<div class="tools d-flex align-items-center" data-groups="new open save saveas layout lmgr|hand* pansel zin zout z11 zfull zsel zlay zlast znext mapnew bmnew bm refresh|ident action+ selct+ formsel+ desel table abac gear* sigma ruler+ tip textann+"></div>
<div class="tools d-flex align-items-center border-top-0" data-groups="dsrc gpkgn vlinen feathern chip|pencils pencil* saveg polyn node attrs trash cut copy paste undo undo~|label diag labpin labpg labeye labmv labrot labed|tri osm|pyc stack|book|"></div>

<main class="work d-flex">
  <section class="leftdock d-flex flex-column">
    <div class="docktitle d-flex align-items-center"><span class="flex-grow-1">Browser</span><svg width="9" height="9" class="me-2"><use href="#float"/></svg><svg width="9" height="9"><use href="#x"/></svg></div>
    <div class="dockbar d-flex align-items-center" data-small="plusbox refresh funnel treeup info"></div>
    <div class="pane" style="height:447px"><div id="browser"></div>
      <div class="vbar"><svg width="10" height="10"><use href="#cU"/></svg><i style="height:168px"></i><svg width="10" height="10"><use href="#cD"/></svg></div></div>
    <div class="docktitle second d-flex align-items-center"><span class="flex-grow-1">Layers</span><svg width="9" height="9" class="me-2"><use href="#float"/></svg><svg width="9" height="9"><use href="#x"/></svg></div>
    <div class="dockbar d-flex align-items-center" data-small="brush addgrp eye funnel* epsf ^ treedn treeup minusbox"></div>
    <div class="pane flex-grow-1" id="layers"></div>
  </section>

  <section class="canvas">
    <svg width="243" height="420" viewBox="0 0 729 1260" style="margin:279px 0 0 141px">
      <defs>
        <pattern id="po" width="32" height="32" patternUnits="userSpaceOnUse" patternTransform="rotate(45)"><rect width="32" height="32" fill="#f0f0f0"/><path d="M16 0v32" stroke="#ffae19" stroke-width="5"/></pattern>
        <pattern id="pgr" width="30" height="30" patternUnits="userSpaceOnUse" patternTransform="rotate(45)"><rect width="30" height="30" fill="#f0f0f0"/><path d="M15 0v30" stroke="#108a10" stroke-width="5"/></pattern>
        <clipPath id="site"><path d="M528 65L404 185 392 262 375 280 313 272 157 420 142 437 70 503 66 857 485 1200 740 1173 740 108 672 78 595 70z"/></clipPath>
        <clipPath id="semi"><path d="M345 430L637 640 680 675 385 832 180 672 125 605 190 555z"/></clipPath>
      </defs>
      <g stroke="#000" stroke-width="2.500" stroke-linejoin="round">
        <path d="M528 65L404 185 392 262 375 280 313 272 157 420 142 437 70 503 66 857 485 1200 740 1173 740 130 640 97z" fill="url(#po)"/>
        <path d="M385 205L325 262 372 266z" fill="url(#po)"/>
        <path d="M345 430L637 640 680 675 385 832 180 672 125 605 190 555z" fill="url(#po)"/>
        <g id="si" clip-path="url(#semi)" stroke="none" fill="#111" font-family="Liberation Sans,sans-serif" font-size="23" letter-spacing="0"></g>
        <path d="M680 675L740 705 740 1050 500 1098 332 988 385 832z" fill="url(#pgr)"/>
        <path d="M333 407L590 155 632 100 672 80 740 108 740 705 637 640z" fill="#008000"/>
        <path d="M385 832L560 742 672 680" fill="none" stroke-width="5"/>
        <path d="M595 72l40 14M700 90l40 12" fill="none"/>
      </g>
      <g fill="none" stroke-linejoin="round" clip-path="url(#site)">
        <g stroke="#000" stroke-width="18" id="casing"></g>
        <g stroke="#fff" stroke-width="13" id="roads">
          <path d="M640 92L590 175 512 305 432 487 385 550 350 608"/>
          <path d="M40 730L120 710 205 650 215 622 350 608 380 635 415 695 455 732 490 732 550 705 590 675 640 658 740 675"/>
          <path d="M150 405L165 510 192 590 215 622" />
          <path d="M458 735L425 782 380 802 300 818 240 870 130 938"/>
          <path d="M76 470L105 560 125 630 150 672"/>
          <path d="M90 473L132 495 104 545 115 640 118 680 102 705"/>
          <path d="M640 655Q660 615 740 612M715 612L708 664"/>
          <path d="M580 68L740 138"/>
        </g>
      </g>
    </svg>
  </section>

  <section class="rightdock d-flex flex-column">
    <div class="docktitle d-flex align-items-center"><span class="flex-grow-1">Processing Toolbox</span><svg width="9" height="9" class="me-2"><use href="#float"/></svg><svg width="9" height="9"><use href="#x"/></svg></div>
    <div class="dockbar d-flex align-items-center" data-small="gears pyd clock doc wrench"></div>
    <div class="field gray"><svg width="13" height="13" class="ms-1 me-2"><use href="#lens"/></svg>Search...</div>
    <div class="pane flex-grow-1 border-top-0" id="toolbox"></div>
  </section>
</main>

<footer class="status d-flex align-items-center">
  <div class="field gray ms-1" style="width:200px;letter-spacing:0"><svg width="13" height="13" class="ms-1 me-2"><use href="#lens"/></svg>Type to locate (Ctrl+K)</div>
  <span style="margin-left:8px;width:919px">1 legend entries removed.</span>
  <span style="width:57px">Coordinate</span><div class="field px-1" style="width:100px">417683.1,90808.7</div>
  <svg width="15" height="16" viewBox="0 0 16 16" class="ms-1" style="margin-right:12px"><path d="M2 2l12 10M1 6l10 8M5 1l9 8M12 1l-8 13" stroke="#555" stroke-width="1.200"/><rect x="5" y="5" width="7" height="10" rx="3" transform="rotate(-30 8 9)" fill="#ddd" stroke="#333"/></svg>
  <span style="width:29px">Scale</span><div class="field px-1 justify-content-between" style="width:77px">1:3288<svg width="10" height="10"><use href="#cDt"/></svg></div>
  <svg width="14" height="17" viewBox="0 0 14 17" style="margin:0 12px 0 5px"><path d="M3.500 8V4.500a3.500 3.500 0 0 1 7 0V8" fill="none" stroke="#aaa" stroke-width="2"/><rect x="1.500" y="7" width="11" height="9" rx="1" fill="#666"/></svg>
  <span style="width:49px">Magnifier</span><div class="field justify-content-between pe-0" style="width:81px;padding-left:3px">100%<span class="spin"></span></div>
  <span style="margin-left:9px;width:51px">Rotation</span><div class="field justify-content-between pe-0" style="width:79px;padding-left:3px">0.0 °<span class="spin"></span></div>
  <span class="cb" style="margin:0 4px 0 7px"><svg><use href="#tick"/></svg></span><span style="width:54px">Render</span>
  <svg width="16" height="16" viewBox="0 0 24 24" fill="#bbb" stroke="#777"><circle cx="12" cy="12" r="10"/><path d="M2 12h20M12 2v20M5 5q7 5 14 0M5 19q7-5 14 0M8 3q-4 9 0 18M16 3q4 9 0 18" fill="none"/></svg>
  <span style="padding-left:3px;width:76px">EPSG:27700</span>
  <svg width="18" height="16" viewBox="0 0 18 16"><path d="M9 1c5 0 8 2.500 8 6 0 2-1 3.500-3 4.500l1 4-4-3.500H9c-5 0-8-2-8-5s3-6 8-6z" fill="#666"/><path d="M4.500 7h2M8 7h2M11.500 7h2" stroke="#fff" stroke-width="2"/></svg>
</footer>

<div class="taskbar seg d-flex align-items-center">
  <div class="startb d-flex align-items-center justify-content-center"><svg width="17" height="17" viewBox="0 0 17 17" fill="#fff"><path d="M0 2.500L7.500 1.500V8H0zM8.500 1.300L17 0V8H8.500zM0 9h7.500v6.500L0 14.500zM8.500 9H17v8L8.500 15.700z"/></svg></div>
  <div class="tsearch d-flex align-items-center"><svg width="22" height="22" viewBox="0 0 22 22" style="margin:0 9px 0 9px"><circle cx="11" cy="11" r="9" fill="none" stroke="#111" stroke-width="2.800"/></svg><span class="flex-grow-1">Type here to search</span>
    <svg width="14" height="20" viewBox="0 0 14 20" fill="none" stroke="#222" stroke-width="1.300" style="margin-right:14px"><rect x="4.500" y="1.500" width="5" height="11" rx="1"/><path d="M2 9v6h10V9M7 15v4M4 18.500h6"/></svg></div>
  <div class="tapp"><svg width="18" height="18" viewBox="0 0 18 18" fill="none" stroke="#eee" stroke-width="1.400"><path d="M2 1v3h9V1M2 17v-3h9v3M2 6.500h9v5H2zM15 1v4M15 7v4M15 13v4"/></svg></div>
  <div class="tapp" style="margin-left:1px"><svg width="22" height="22" viewBox="0 0 24 24"><path d="M1 11C2 4 7 1 12 1c7 0 11 5 11 12v2H8c0 6 8 7 13 4v4C13 26 4 23 4 15c0-3 2-6 5-7-1 1-1 2-1 3h8c0-8-11-8-15 0z" fill="#0a7ddb"/></svg></div>
  <div class="tapp run"><svg width="24" height="20" viewBox="0 0 24 20"><path d="M1 1h9l2 2h11v16H1z" fill="#f5c94f"/><path d="M1 5h22v14H1z" fill="#ffe694"/><path d="M6 19v-8h12v8h-3v-4H9v4z" fill="#3ba7e0"/></svg></div>
  <div class="tapp run"><svg width="24" height="24" viewBox="0 0 24 24"><path d="M12 4a8.500 8.500 0 1 0 8 12h-5c-2 3-7 2-7-2h13C21 8 17 4 12 4zM8 11c1-4 7-4 8 0z" fill="#5cc8f2" fill-rule="evenodd"/><path d="M2 22C-1 14 12 1 22 1c2 1 1 4 0 6 1-4-1-5-5-3C9 8 3 16 5 21z" fill="#f5c431"/></svg></div>
  <div class="tapp act"><svg width="25" height="25"><use href="#q"/></svg></div>
  <div class="tapp run"><svg width="24" height="24" viewBox="0 0 24 24"><circle cx="12" cy="13" r="10" fill="#ff7a1a"/><path d="M14 1c7 3 10 9 7 15-1 3-5 6-8 6 5-3 7-8 4-12 0-3-3-5-3-9z" fill="#ffcb2d"/><path d="M2 8c1-2 2-4 3-5 2 3 5 3 8 5 4 3 2 8-2 8-4 0-6-3-9-8z" fill="#d6303d"/><circle cx="12" cy="11" r="4.500" fill="#2b5fb8"/></svg></div>
  <div class="tray ms-auto d-flex align-items-center">
    <svg width="18" height="18" viewBox="0 0 18 18" fill="none" stroke="#fff" stroke-width="1.300" style="margin-left:4px"><circle cx="12" cy="3.500" r="2.500"/><path d="M8.500 9.500c1-4 6-4 7 0"/><circle cx="6" cy="9" r="2.500"/><path d="M2 16c.5-5 7.500-5 8 0"/></svg>
    <svg width="12" height="8" viewBox="0 0 12 8" fill="none" stroke="#fff" stroke-width="1.300" style="margin-left:21px"><path d="M1 7l5-5 5 5"/></svg>
    <svg width="17" height="12" viewBox="0 0 17 12" style="margin-left:9px"><path d="M3 10C0 9 1 5 4 5c1-4 7-5 8-1 4 0 5 5 2 7H5z" fill="#0a84e6"/></svg>
    <svg width="18" height="16" viewBox="0 0 18 16" fill="none" stroke="#fff" stroke-width="1.200" style="margin-left:7px"><path d="M6 3h11v8H6M11 11v4M8 14.500h7M1 2h4v4H1zM3 6v8h4"/></svg>
    <svg width="18" height="16" viewBox="0 0 18 16" fill="none" stroke="#fff" stroke-width="1.200" style="margin-left:6px"><path d="M1 6h2l4-3v10L3 10H1zM9.500 5q2 3 0 6M12 3.500q3 4.500 0 9M14.500 2q4 6 0 12"/></svg>
    <div class="text-center" style="width:70px;margin-left:3px;font-size:11.5px;line-height:18px;letter-spacing:-.35px">16:22<br>25/09/2018</div>
    <svg width="30" height="28" viewBox="0 0 30 28" style="margin-left:11px"><path d="M2 3h15v13H9l-4 4v-4H2z" fill="#fff"/><path d="M5 6.500h9M5 9.500h9M5 12.500h6" stroke="#333"/><circle cx="15" cy="19" r="8" fill="#17518c" stroke="#6ca6dc"/><text x="15" y="23" font-size="11" fill="#fff" text-anchor="middle">1</text></svg>
  </div>
</div>

<!-- Attribute table window -->
<section class="win attr">
  <div class="wtitle seg d-flex align-items-center" style="color:#999;letter-spacing:-.32px"><svg class="i16" style="margin:0 8px"><use href="#q"/></svg><span class="flex-grow-1" style="margin-top:-2px">Single parts :: Features Total: 34</span>
    <svg width="130" height="20" viewBox="0 0 130 20" fill="none" stroke="#8a8a8a" style="margin-right:4px"><path d="M15 8.500h10M60.500 3.500h9v9h-9zM106 3.500l10 10M116 3.500l-10 10"/></svg></div>
  <div class="d-flex align-items-center" style="height:26px;padding-left:2px" data-small="pencil* multied saveed refreshg | tblnew trash cut copy paste"></div>
  <div class="d-flex align-items-start" style="height:25px;padding-left:3px">
    <div class="combo dd" style="width:88px;height:21px"><span><b class="gray">123</b> id</span></div><span class="text-center" style="width:15px;padding-top:4px">=</span>
    <div class="pbtn h21" style="width:21px"><svg class="i16"><use href="#eps"/></svg></div>
    <div class="field justify-content-end" style="width:759px;height:21px;margin-left:7px"><svg width="10" height="10"><use href="#cDt"/></svg></div>
    <div class="pbtn" style="width:60px;margin:1px 0 0 6px">Update All</div><div class="pbtn gray" style="width:90px;margin:1px 0 0 5px;background:#ccc;border-color:#bfbfbf">Update Selected</div>
  </div>
  <div class="pane grid-attr">
    <div class="vh" id="vh"></div><div class="acol" id="c1"><div class="hd">id</div></div><div class="acol" id="c2"><div class="hd">p1_code</div></div>
    <div class="vbar"><svg width="10" height="10"><use href="#cU"/></svg><i style="height:187px"></i><svg width="10" height="10"><use href="#cD"/></svg></div>
  </div>
  <div class="d-flex align-items-center" style="padding:2px 4px 0">
    <div class="pbtn justify-content-start ps-1 dd" style="width:118px"><svg class="i16 me-1"><use href="#funnel"/></svg>Show All Features</div>
    <div class="pbtn ms-auto" style="width:21px"><svg class="i16"><use href="#formv"/></svg></div><div class="pbtn" style="width:22px;margin-left:2px;background:#cce4f7;border-color:#005499"><svg class="i16"><use href="#table"/></svg></div>
  </div>
</section>

<!-- Field calculator -->
<section class="win dlg d-flex flex-column">
  <div class="wtitle seg d-flex align-items-center" style="height:30px"><svg class="i16" style="margin:0 5px 0 8px"><use href="#q"/></svg><span class="flex-grow-1">Field Calculator</span><span style="font-size:14px;margin-right:36px">?</span><svg width="11" height="11" style="margin-right:18px"><use href="#xt"/></svg></div>
  <div class="d-flex align-items-center gray" style="margin:13px 0 0 11px;letter-spacing:-.1px"><span class="cb off me-1"></span>Only update 0 selected features</div>
  <div class="d-flex" style="padding:7px 11px 0 11px;height:112px">
    <div style="width:278px">
      <div class="d-flex align-items-center bld text-dark"><span class="cb me-1"><svg><use href="#tick"/></svg></span>Create a new field<span class="rule ms-1"></span></div>
      <div class="d-flex align-items-center" style="margin:10px 0 4px 3px"><span class="cb me-1"></span>Create virtual field</div>
      <div style="padding-left:2px;margin-top:5px">
        <div class="frow"><span>Output field name</span><div class="field" style="padding-left:2px">area</div></div>
        <div class="frow" style="margin-top:3px"><span>Output field type</span><div class="combo dd">Whole number (integer)</div></div>
        <div class="frow" style="margin-top:3px"><span>Output field length</span><div class="d-flex align-items-center"><div class="field justify-content-between pe-0" style="width:54px;height:18px;padding-left:3px">10<span class="spin"></span></div><span style="width:67px;padding-left:5px">Precision</span><div class="field gray justify-content-between pe-0" style="width:54px;height:18px;padding-left:2px;background:#f0f0f0;border-color:#ccc">3<span class="spin opacity-50"></span></div></div></div>
      </div>
    </div>
    <div class="flex-grow-1" style="margin-left:5px">
      <div class="d-flex align-items-center bld text-dark"><span class="cb me-1"></span>Update existing field<span class="rule ms-1"></span></div>
      <div class="combo inert dd justify-content-end" style="margin:40px 3px 0"></div>
    </div>
  </div>
  <div class="tabs"><div class="bg-white" style="width:77px;height:20px">Expression</div><div style="width:93px;height:18px">Function Editor</div></div>
  <div class="d-flex" style="padding:9px 20px 0 20px;height:385px">
    <div style="width:228px">
      <div class="ops d-flex"><div class="pbtn">=</div><div class="pbtn">+</div><div class="pbtn">-</div><div class="pbtn">/</div><div class="pbtn">*</div><div class="pbtn">^</div><div class="pbtn">||</div><div class="pbtn">(</div><div class="pbtn">)</div><div class="pbtn">\n'</div></div>
      <div class="pane" style="height:319px"><div style="background:#fdf3ec;margin:1px;height:17px;font:12.500px/17px var(--ui);letter-spacing:-.2px"><span class="gray">$</span><span style="border-right:1px solid #000;display:inline-block">area</span></div></div>
      <div style="margin-top:5px">Output preview: &nbsp;4842.3871056733</div>
    </div>
    <div style="width:194px;margin-left:22px">
      <div class="field gray"><svg width="13" height="13" class="ms-1 me-2"><use href="#lens"/></svg>Search</div>
      <div class="pane" style="height:349px;margin-top:6px;padding-top:1px" id="funcs"></div>
    </div>
    <div class="pane" style="width:194px;height:375px;margin-left:4px;padding:4px">
      <div class="green-h">group Aggregates</div>
      <div class="text-wrap helptxt">Contains functions which aggregate values over layers and fields.</div>
    </div>
  </div>
  <div class="d-flex justify-content-end" style="gap:7px;padding:37px 12px 0 0"><div class="pbtn" style="width:74px;height:22px;border:2px solid #0078d7">OK</div><div class="pbtn" style="width:74px;height:22px">Cancel</div><div class="pbtn" style="width:74px;height:22px">Help</div></div>
</section>

<script>
const use=(id,c,extra='')=>`<svg class="${c}" ${extra}><use href="#${id}"/></svg>`;
// Toolbars: "*" pressed, "+" has a drop-down arrow, "~" mirrored
document.querySelectorAll('[data-groups]').forEach(bar=>{
  bar.innerHTML=bar.dataset.groups.split('|').map((g,i,a)=>`<div class="grp d-flex${i==a.length-1?' open-end':''}" ${g?'':'style="height:29px"'}>`+(g?g.split(' ').map(t=>{
    const id=t.replace(/[*+~]/g,'');
    return `<div class="tb${t.endsWith('*')?' on':''}">${use(id,'i24',t.endsWith('~')?'transform="scale(-1 1)"':'')}</div>`+(t.endsWith('+')?'<div class="drop d-flex align-items-center"></div>':'');
  }).join(''):'')+'</div>').join('');
});
document.querySelectorAll('[data-small]').forEach(bar=>{
  bar.innerHTML=bar.dataset.small.split(' ').map(t=>{
    if(t=='|')return '<div class="sep-v"></div>';
    if(t=='^')return '<div class="drop d-flex align-items-center"></div>';
    return `<div class="sb${t.endsWith('*')?' on':''}">${use(t.replace('*',''),'i16')}</div>`;
  }).join('');
});
const chev=c=>`<span class="chev">${c?`<svg width="10" height="10"><use href="#c${c}"/></svg>`:''}</span>`;
const row=(c,ind,ic,txt)=>`<div class="trow">${chev(c)}<span style="width:${ind}px"></span>${ic?use(ic,'i16'):''}<span class="txt">${txt}</span></div>`;
browser.innerHTML=[['','fav','Favorites'],['R','phome','Project Home'],['R','folder','Home'],['R','folder','C:\\'],['R','folder','D:\\'],['R','folder','H:\\'],['R','folder','I:\\'],['','gpkg','GeoPackage'],['','feather','SpatiaLite'],['','pg','PostGIS'],['','ms','MSSQL'],['','ora','Oracle'],['','db2','DB2'],['','globe','WMS/WMTS'],['D','globe','XYZ Tiles']].map(r=>row(r[0],3,r[1],r[2])).join('')
 +['Bing VirtualEarth','CartoDb Dark Matter','CartoDb Positron','Esri Boundaries Places','Esri Gray (dark)','Esri Gray (light)','Esri National Geographic',''].map(t=>row('',23,'xyz',t)).join('');
const cb=on=>`<span class="cb">${on?'<svg><use href="#tick"/></svg>':''}</span>`;
const sw=[['A1.1.1 - Broadleaved woodland - semi-n...','<rect width="18" height="18" fill="#008000"/>'],
 ['A1.1.2 - Broadleaved woodland - planta...','<path d="M1 11L11 1M8 17L17 8" stroke="#108a10" stroke-width="1.800"/>'],
 ['B1.1 - Acid grassland - unimproved','<path d="M1 14L14 1M9 17L17 9" stroke="#ffae19" stroke-width="1.800"/>'],
 ['B1.2 - Acid grassland - semi-improved','<path d="M1 14L14 1M9 17L17 9" stroke="#ffae19" stroke-width="1.800"/><text x="6" y="14" font-size="10">s</text><path d="M1 2h3M14 2h3" stroke="#000" stroke-width="2"/>']];
layers.innerHTML=`<div class="trow" style="background:linear-gradient(90deg,#fff 20px,#d9d9d9 20px)">${chev('D')}<span style="width:3px"></span>${cb(1)}<span style="width:6px"></span>${use('polyed','i16')}<span class="txt bld text-decoration-underline">Single parts</span></div>`
 +sw.map(s=>`<div class="trow"><span style="width:43px"></span>${cb(1)}<svg width="18" height="18" style="margin-left:6px;background:#f0f0f0;border:1px solid #555">${s[1]}</svg><span class="txt" style="letter-spacing:-.16px">${s[0]}</span></div>`).join('')
 +[['polyg','Difference'],['polyg','Buffered'],['xyz','Google Satellite'],['vline','lines'],['polyr','phase1_test'],['xyz','OpenStreetMap Monochrome'],['xyz','OpenStreetMap'],['xyz','Esri Gray (light)'],['polyg','sssi'],['xyz','dtm'],['xyz','dsm']].map(r=>`<div class="trow"><span style="width:23px"></span>${cb(0)}<span style="width:6px"></span>${use(r[0],'i16','color="#888"')}<span class="txt bld dim">${r[1]}</span></div>`).join('');
toolbox.innerHTML=`<div class="trow" style="height:17px">${chev('D')}<span class="txt" style="padding-left:2px">Recently used</span></div>`
 +[['randp','Random points inside polygons'],['saga','Add raster values to points'],['gridr','Grid (Moving average)'],['gridr','Grid (Data metrics)'],['buf','Buffer'],['multi','Multipart to singleparts']].map(r=>row('',23,r[0],r[1])).join('')
 +['Cartography','Database','File tools','Graphics','Interpolation','Layer tools','Network analysis','Raster analysis','Raster terrain analysis','Raster tools','Vector analysis','Vector creation','Vector general','Vector geometry','Vector overlay','Vector selection','Vector table'].map(t=>row('R',2,'q',t)).join('');
const codes=['A1.1.1','A1.1.1','A1.1.1',...Array(12).fill('B1.1'),'B1.2'];
codes.forEach((c,i)=>{
  vh.insertAdjacentHTML('beforeend',`<div>${i+1}</div>`);
  c1.insertAdjacentHTML('beforeend',`<div class="cell num">${c[0]=='A'?1:c=='B1.1'?4:2}</div>`);
  c2.insertAdjacentHTML('beforeend',`<div class="cell">${c}</div>`);
});
funcs.innerHTML='<div class="frw"><span class="chev"></span><b class="nm plain">row_number</b></div>'+['Aggregates','Arrays','Color','Conditionals','Conversions','Date and Time','Fields and Values','Fuzzy Matching','General','Geometry','Map Layers','Maps','Math','Operators','Record and Attributes','String','Variables'].map(t=>`<div class="frw">${chev('R')}<span class="nm${t=='Variables'?' cur':''}">${t}</span></div>`).join('');
// Dark casing under every road
casing.innerHTML=roads.innerHTML;
// Staggered SI markers over the semi-improved grassland
let marks='';
for(let k=0;k<15;k++)for(let x=k%2?138:111;x<680;x+=54)marks+=`<text x="${x}" y="${453+27.7*k}">SI</text>`;
si.innerHTML=marks;
</script>
</body>
</html>
